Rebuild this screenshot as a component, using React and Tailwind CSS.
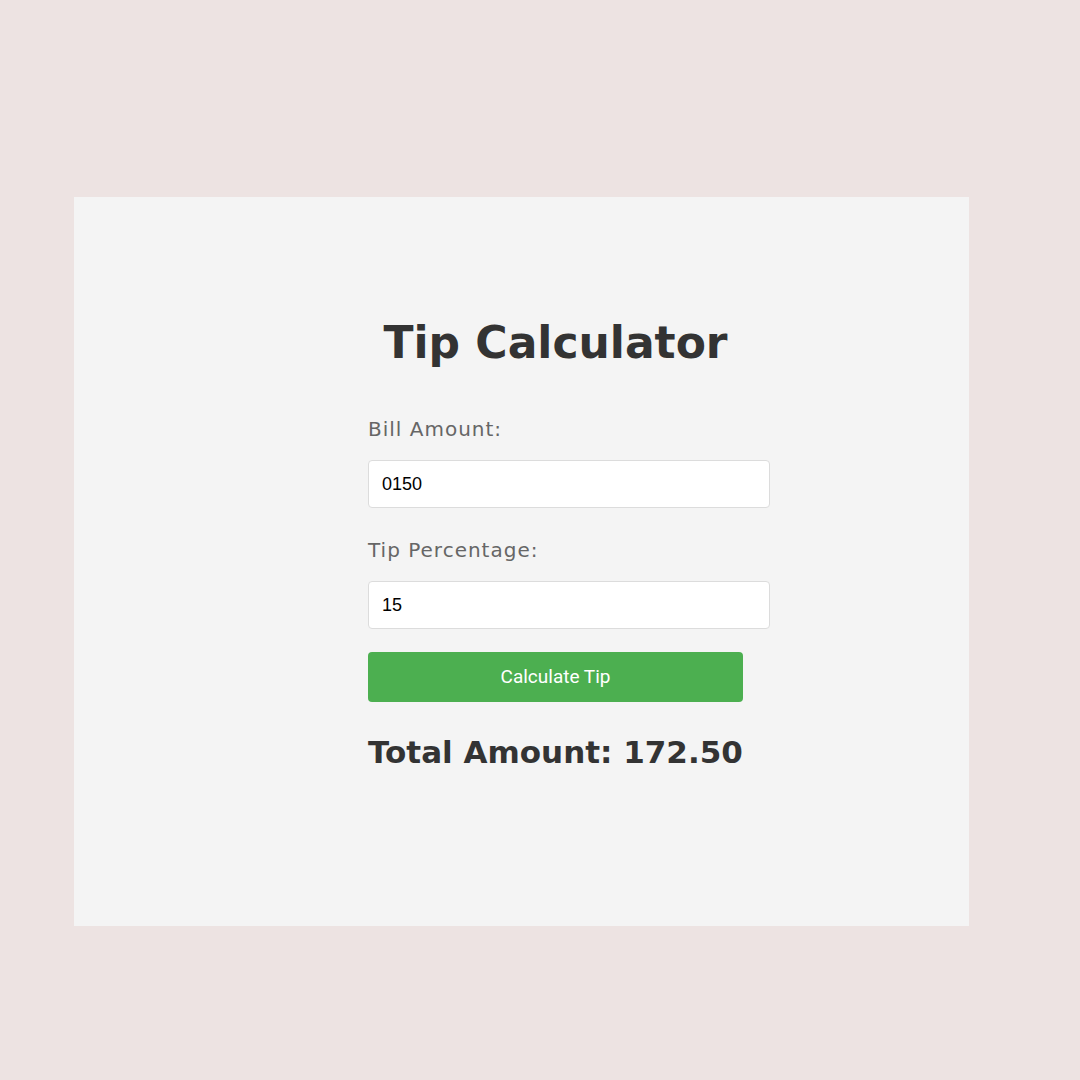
import React, { useState } from 'react'

export default function App() {
  const [bill, setBill] = useState('0150')
  const [tip, setTip] = useState('15')
  const [total, setTotal] = useState('172.50')

  function calculate() {
    const b = Number(bill) || 0
    const t = Number(tip) || 0
    setTotal((b + (b * t) / 100).toFixed(2))
  }

  return (
    <div className="w-[1080px] h-[1080px] bg-[#ede3e2] pt-[197px] pl-[74px]">
      <div className="w-[895px] h-[729px] bg-[#f4f4f4] pl-[294px] pt-[116px]">
        <div className="w-[375px] flex flex-col" style={{ fontFamily: '"DejaVu Sans", "Open Sans", sans-serif' }}>
          <h1 className="text-center text-[44px] leading-[60px] font-bold text-[#333]">
            Tip Calculator
          </h1>

          {/* Bill */}
          <label className="mt-[42px] text-[20px] leading-[28px] text-[#666] tracking-[1px]">Bill Amount:</label>
          <input
            value={bill}
            onChange={(e) => setBill(e.target.value)}
            className="mt-[17px] w-[402px] h-[48px] px-[13px] bg-white border border-[#dcdcdc] rounded-[4px] text-[18px] text-black outline-none"
            style={{ fontFamily: '"Liberation Sans", Arial, sans-serif' }}
          />

          {/* Tip */}
          <label className="mt-[28px] text-[20px] leading-[28px] text-[#666] tracking-[1px]">Tip Percentage:</label>
          <input
            value={tip}
            onChange={(e) => setTip(e.target.value)}
            className="mt-[17px] w-[402px] h-[48px] px-[13px] bg-white border border-[#dcdcdc] rounded-[4px] text-[18px] text-black outline-none"
            style={{ fontFamily: '"Liberation Sans", Arial, sans-serif' }}
          />

          <button
            onClick={calculate}
            className="mt-[23px] w-[375px] h-[50px] bg-[#4caf50] rounded-[4px] text-white text-[19px]"
            style={{ fontFamily: 'Roboto, "Liberation Sans", Arial, sans-serif' }}
          >
            Calculate Tip
          </button>

          <div className="mt-[28px] text-[31px] leading-[44px] font-bold text-[#333] whitespace-nowrap">
            Total Amount: {total}
          </div>
        </div>
      </div>
    </div>
  )
}
